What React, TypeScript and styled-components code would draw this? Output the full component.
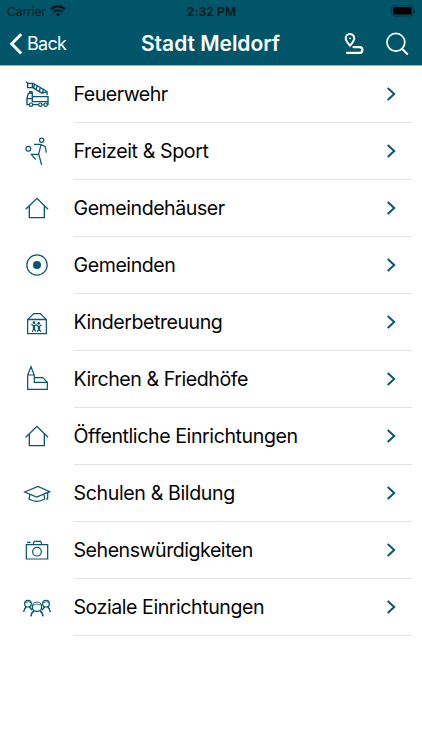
import React from "react";
import styled, { createGlobalStyle } from "styled-components";

const Global = createGlobalStyle`
  * { box-sizing: border-box; }
  body { margin: 0; background: #fff; font-family: Inter, "Liberation Sans", sans-serif; }
`;

const Screen = styled.main`
  width: 422px;
  height: 750px;
  background: #fff;
  overflow: hidden;
`;

const Header = styled.header`
  height: 66px;
  background: #005668;
  border-bottom: 1px solid #8fb5bd;
`;

const StatusBar = styled.div`
  height: 22px;
  display: grid;
  grid-template-columns: 1fr auto 1fr;
  align-items: center;
  padding: 0 6px 0 7px;
  color: #07171b;
  font-size: 12px;
`;

const Carrier = styled.div`
  display: flex;
  align-items: center;
  gap: 4px;
  letter-spacing: -0.05px;
`;

const Clock = styled.div`
  font-weight: 600;
  letter-spacing: 0.18px;
`;

const BatterySlot = styled.div`
  display: flex;
  justify-content: flex-end;
`;

const NavBar = styled.nav`
  height: 43px;
  display: grid;
  grid-template-columns: 1fr auto 1fr;
  align-items: center;
  padding: 0 13px 0 9px;
  color: #fff;
`;

const BackButton = styled.button`
  display: flex;
  align-items: center;
  gap: 4px;
  padding: 0;
  border: 0;
  background: none;
  color: inherit;
  font: 400 18px/22px Inter, sans-serif;
  letter-spacing: -0.7px;
`;

const Title = styled.h1`
  margin: 0;
  padding-left: 3px;
  font-size: 21px;
  line-height: 26px;
  font-weight: 600;
  letter-spacing: -0.03px;
`;

const Actions = styled.div`
  display: flex;
  justify-content: flex-end;
  align-items: center;
  gap: 20px;
`;

const List = styled.ul`
  margin: 0;
  padding: 0;
  list-style: none;
`;

const Row = styled.li`
  height: 57px;
  display: flex;
  padding-right: 10px;
  padding-left: 15px;
`;

const IconSlot = styled.div`
  width: 58.5px;
  flex: none;
  display: flex;
  align-items: center;
`;

const RowBody = styled.div`
  flex: 1;
  display: flex;
  align-items: center;
  justify-content: space-between;
  padding-right: 16px;
  border-bottom: 1px solid #e4e4e4;
`;

const Label = styled.span<{ $tracking: number }>`
  font-size: 19.6px;
  line-height: 26px;
  color: #050505;
  white-space: nowrap;
  letter-spacing: ${(p) => p.$tracking}px;
`;

const Glyph = styled.svg`
  display: block;
  flex: none;
  fill: none;
  stroke: currentColor;
`;

const RowGlyph = styled(Glyph)`
  color: #09576a;
  stroke-width: 3.7;
`;

type IconName = "truck" | "sport" | "house" | "target" | "care" | "church" | "school" | "camera" | "people";

const shapes: Record<IconName, React.ReactNode> = {
  truck: (
    <>
      <path d="M33 29L39 34M38 34H52V47H38ZM53 33L94 57M52 46L82 64M58 37L56 48M67 42L63 52M76 47L73 58M85 53L82 64M79 64L96 59V69" strokeWidth="4.2" />
      <path d="M43 98H36V79L40 64H52V74H99V97H95M53 98H70M52 74V89H99M37 80H52M82 98H86M44 64V59H51V64" strokeWidth="4.2" />
      <circle cx="48" cy="98" r="5" />
      <circle cx="76" cy="98" r="5" />
      <circle cx="92" cy="98" r="5" />
    </>
  ),
  sport: (
    <>
      <circle cx="80" cy="34" r="6.3" />
      <circle cx="40" cy="59" r="7.2" />
      <path d="M57 46H77L91 53L94 71M78 47L71 75L80 108M71 76H49L62 92" />
    </>
  ),
  house: <path d="M32 70L66 37L99 70M43 61V95H88V61" strokeWidth="4" />,
  target: (
    <>
      <circle cx="66" cy="66" r="30.5" />
      <circle cx="66" cy="66" r="12" fill="currentColor" stroke="none" />
    </>
  ),
  care: (
    <>
      <path d="M38 59L56 41H76L94 59M38 58H94V101H38ZM38 59H94" />
      <circle cx="57" cy="68" r="4" fill="currentColor" stroke="none" />
      <circle cx="71" cy="70" r="4" fill="currentColor" stroke="none" />
      <path d="M49 73L57 78L64 74L71 80L80 74M57 76V85L52 95M57 85L62 94M72 78V87L67 95M72 87L78 95" />
      <path d="M57 76V86M72 79V87" strokeWidth="7" />
    </>
  ),
  church: (
    <>
      <path d="M38 55L48 29L58 55V76H97V97H38ZM38 54H58" />
      <path d="M59 62H83L97 76" />
    </>
  ),
  school: (
    <>
      <path d="M29 63L69 46L104 62L65 78ZM104 62L98 66V85M98 79L95 86" />
      <path d="M45 70L42 84Q65 98 89 84L87 71" />
    </>
  ),
  camera: (
    <>
      <path d="M34 50H98V93H34ZM36 43H47M54 50L58 40H77L81 50" />
      <circle cx="66" cy="71" r="13" />
    </>
  ),
  people: (
    <>
      <circle cx="66" cy="65" r="14" />
      <circle cx="39" cy="56" r="10" />
      <circle cx="93" cy="56" r="10" />
      <path d="M48 94Q49 82 57 78M84 94Q83 82 75 78M26 81Q27 70 34 66M106 81Q105 70 98 66M43 66L52 76M89 66L80 76" strokeWidth="4.4" />
      <path d="M53 60Q62 60 66 57Q71 60 79 60M30 53Q37 53 40 50L48 53M84 53Q91 53 94 50L102 53" strokeWidth="2.2" />
    </>
  ),
};

const categories: { label: string; icon: IconName; tracking: number }[] = [
  { label: "Feuerwehr", icon: "truck", tracking: -0.52 },
  { label: "Freizeit & Sport", icon: "sport", tracking: -0.4 },
  { label: "Gemeindehäuser", icon: "house", tracking: -0.47 },
  { label: "Gemeinden", icon: "target", tracking: -0.44 },
  { label: "Kinderbetreuung", icon: "care", tracking: -0.48 },
  { label: "Kirchen & Friedhöfe", icon: "church", tracking: -0.45 },
  { label: "Öffentliche Einrichtungen", icon: "house", tracking: -0.42 },
  { label: "Schulen & Bildung", icon: "school", tracking: -0.38 },
  { label: "Sehenswürdigkeiten", icon: "camera", tracking: -0.48 },
  { label: "Soziale Einrichtungen", icon: "people", tracking: -0.46 },
];

export default function App() {
  return (
    <Screen>
      <Global />
      <Header>
        <StatusBar>
          <Carrier>
            <span>Carrier</span>
            <Glyph width="16" height="12" viewBox="0 0 16 12" strokeWidth="2.2">
              <path d="M1 4.2Q8-1.7 15 4.2M3.5 7Q8 3.2 12.5 7" />
              <path d="M5.5 9Q8 7 10.5 9L8 11.5Z" fill="currentColor" stroke="none" />
            </Glyph>
          </Carrier>
          <Clock>2:32 PM</Clock>
          <BatterySlot>
            <Glyph width="25" height="12" viewBox="0 0 25 12">
              <rect x="0.5" y="0.5" width="21.5" height="10.5" rx="2.8" stroke="#04333e" />
              <rect x="2" y="2" width="18.5" height="7.5" rx="1.4" fill="#000" stroke="none" />
              <path d="M23.5 4V8" stroke="#04333e" />
            </Glyph>
          </BatterySlot>
        </StatusBar>
        <NavBar>
          <BackButton>
            <Glyph width="14" height="22" viewBox="0 0 14 22" strokeWidth="3">
              <path d="M12.2 1.2L2.7 10.8L12.2 20.5" />
            </Glyph>
            Back
          </BackButton>
          <Title>Stadt Meldorf</Title>
          <Actions>
            <Glyph width="22" height="22" viewBox="0 0 22 22" strokeWidth="2">
              <path d="M7 12.7C5 10.2 2.7 7.8 2.7 5.3A4.3 4.3 0 0 1 11.3 5.3C11.3 7.8 9 10.2 7 12.7Z" />
              <circle cx="7" cy="5.3" r="0.9" fill="currentColor" stroke="none" />
              <path d="M10.5 14.2H16.6A2.8 2.8 0 0 1 16.6 19.8H4" strokeWidth="2.2" strokeLinecap="round" />
            </Glyph>
            <Glyph width="24" height="24" viewBox="0 0 24 24" strokeWidth="1.7">
              <circle cx="10.9" cy="10.3" r="8.9" />
              <path d="M17 16.7L22.8 22.5" strokeWidth="2" />
            </Glyph>
          </Actions>
        </NavBar>
      </Header>
      <List>
        {categories.map(({ label, icon, tracking }) => (
          <Row key={label}>
            <IconSlot>
              <RowGlyph width="45" height="45" viewBox="0 0 135 135">
                {shapes[icon]}
              </RowGlyph>
            </IconSlot>
            <RowBody>
              <Label $tracking={tracking}>{label}</Label>
              <Glyph width="10" height="16" viewBox="0 0 10 16" strokeWidth="2" color="#09576a">
                <path d="M1.7 2L8.2 8L1.7 14" />
              </Glyph>
            </RowBody>
          </Row>
        ))}
      </List>
    </Screen>
  );
}
